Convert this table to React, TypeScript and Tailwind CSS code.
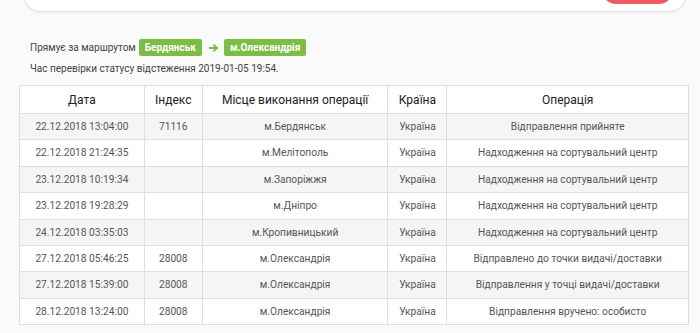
import React from "react";

const rows = [
  ["22.12.2018 13:04:00", "71116", "м.Бердянськ", "Україна", "Відправлення прийняте"],
  ["22.12.2018 21:24:35", "", "м.Мелітополь", "Україна", "Надходження на сортувальний центр"],
  ["23.12.2018 10:19:34", "", "м.Запоріжжя", "Україна", "Надходження на сортувальний центр"],
  ["23.12.2018 19:28:29", "", "м.Дніпро", "Україна", "Надходження на сортувальний центр"],
  ["24.12.2018 03:35:03", "", "м.Кропивницький", "Україна", "Надходження на сортувальний центр"],
  ["27.12.2018 05:46:25", "28008", "м.Олександрія", "Україна", "Відправлено до точки видачі/доставки"],
  ["27.12.2018 15:39:00", "28008", "м.Олександрія", "Україна", "Відправлення у точці видачі/доставки"],
  ["28.12.2018 13:24:00", "28008", "м.Олександрія", "Україна", "Відправлення вручено: особисто"],
];

export default function App() {
  return (
    <div
      className="w-[700px] h-[333px] overflow-hidden bg-[#fafafa] text-[#555]"
      style={{ fontFamily: "Roboto, 'Noto Sans', sans-serif" }}
    >
      <div className="ml-[24px] w-[662px] h-[60px] -mt-[48px] bg-white border border-[#e3e3e3] rounded-[16px] shadow-[0_1px_3px_rgba(0,0,0,0.06)] flex items-end justify-end pr-[12px] pb-[7px]">
        <div className="w-[71px] h-[30px] rounded-[14px] bg-[#f05a60]" />
      </div>

      <div className="pl-[30px] pt-[27px]">
        <div className="flex items-center text-[10px] text-[#444] h-[17px]">
          <span>Прямує за маршрутом</span>
          <span className="ml-[3px] bg-[#7cbd43] text-white font-bold text-[10px] px-[6px] h-[17px] leading-[17px] rounded-[2px]">
            Бердянськ
          </span>
          <svg width="11" height="10" viewBox="0 0 12 10" className="ml-[6px] mr-[5px]">
            <path d="M1 5h9M6 1.5L10 5L6 8.5" stroke="#7cbd43" strokeWidth="2" fill="none" />
          </svg>
          <span className="bg-[#7cbd43] text-white font-bold text-[10px] px-[6px] h-[17px] leading-[17px] rounded-[2px]">
            м.Олександрія
          </span>
        </div>
        <div className="mt-[5px] text-[10px] text-[#444] leading-[15px]">
          Час перевірки статусу відстеження 2019-01-05 19:54.
        </div>
      </div>

      <table className="ml-[19px] mt-[9px] w-[670px] border-collapse bg-white text-center">
        <colgroup>
          <col style={{ width: 125 }} />
          <col style={{ width: 58 }} />
          <col style={{ width: 186 }} />
          <col style={{ width: 59 }} />
          <col style={{ width: 242 }} />
        </colgroup>
        <thead>
          <tr className="h-[28px]">
            {["Дата", "Індекс", "Місце виконання операції", "Країна", "Операція"].map((h) => (
              <th
                key={h}
                className="border border-[#dedede] text-[12px] font-normal text-[#222] p-0"
              >
                {h}
              </th>
            ))}
          </tr>
        </thead>
        <tbody>
          {rows.map((r, i) => (
            <tr key={i} className={i % 2 === 0 ? "bg-[#f5f5f5] h-[26.4px]" : "bg-white h-[26.4px]"}>
              {r.map((c, j) => (
                <td key={j} className="border border-[#dedede] text-[10.2px] text-[#555] p-0">
                  {c}
                </td>
              ))}
            </tr>
          ))}
        </tbody>
      </table>
    </div>
  );
}
